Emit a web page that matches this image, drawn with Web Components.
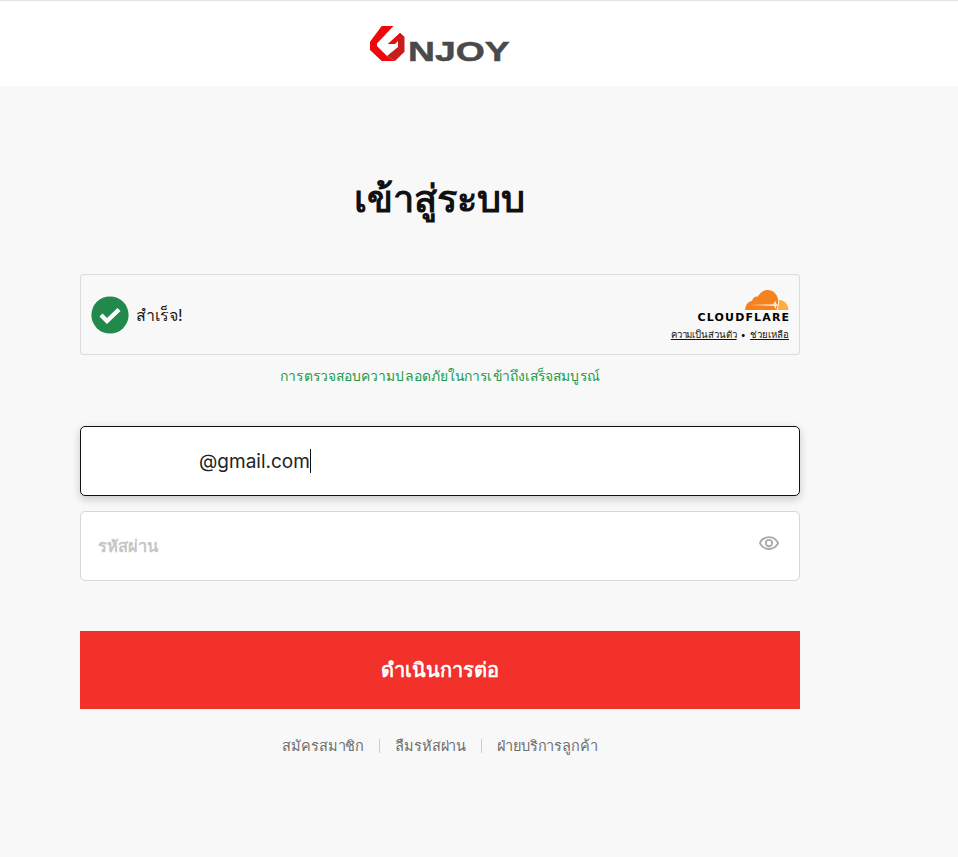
<!DOCTYPE html>
<html lang="th">
<head>
<meta charset="utf-8">
<title>เข้าสู่ระบบ</title>
<style>
  html, body { margin: 0; background: #f8f8f8; }
  body { font-family: "Inter", "Noto Sans", "Noto Sans CJK SC", sans-serif; }
</style>
</head>
<body>
<site-header></site-header>
<login-page>
  <h-title slot="title">เข้าสู่ระบบ</h-title>
  <captcha-box slot="captcha"></captcha-box>
  <text-field slot="email" value="@gmail.com" focused></text-field>
  <text-field slot="password" placeholder="รหัสผ่าน" eye></text-field>
  <submit-button slot="submit">ดำเนินการต่อ</submit-button>
  <link-row slot="links"></link-row>
</login-page>

<script>
class SiteHeader extends HTMLElement {
  connectedCallback() {
    this.attachShadow({ mode: "open" });
    this.shadowRoot.innerHTML = `
      <style>
        :host { display: block; height: 85px; background: #fff; border-top: 1px solid #e3e6dc; }
        .inner { width: 720px; margin-left: 80px; height: 100%; display: flex; justify-content: center; align-items: center; }
        .logo { display: flex; align-items: flex-end; height: 37px; width: 141px; margin-top: -1px; margin-left: -1px; }
        svg { display: block; flex: none; }
        .name {
          font: 700 28.5px/21px "Liberation Sans", sans-serif;
          color: #4a4a4a;
          -webkit-text-stroke: 0.5px #4a4a4a;
          display: inline-block;
          margin-left: 2px;
          transform: scaleX(1.31);
          transform-origin: left center;
        }
      </style>
      <div class="inner">
        <div class="logo">
          <svg width="37" height="37" viewBox="0 0 37 37">
            <path d="M1 16.7 L12.7 1 L24.5 1 L8 18.5 L8 21 L18 31 L26 36 L12.7 36 L1 25 Z" fill="#ee0a0a"/>
            <path d="M18 31 L26 36 L35.5 26.7 L35.5 11.7 L31 8 L19 19 L26 19 L29 16 L29 22 Z" fill="#c91c1c"/>
            <path d="M19 19 L31 8 L33 9.7 L22 19 Z" fill="#ee0a0a"/>
          </svg>
          <span class="name">NJOY</span>
        </div>
      </div>
    `;
  }
}
customElements.define("site-header", SiteHeader);

class LoginPage extends HTMLElement {
  connectedCallback() {
    this.attachShadow({ mode: "open" });
    this.shadowRoot.innerHTML = `
      <style>
        :host { display: block; width: 720px; margin-left: 80px; padding-top: 88px; }
        .title { display: block; margin-bottom: 52px; }
        .note { text-align: center; color: #1e9a4a; font-size: 13.9px; letter-spacing: 0.09px; line-height: 20px; margin-top: 11px; margin-bottom: 40px; }
        .fields { display: flex; flex-direction: column; gap: 15px; margin-bottom: 50px; }
      </style>
      <div class="title"><slot name="title"></slot></div>
      <slot name="captcha"></slot>
      <div class="note">การตรวจสอบความปลอดภัยในการเข้าถึงเสร็จสมบูรณ์</div>
      <div class="fields">
        <slot name="email"></slot>
        <slot name="password"></slot>
      </div>
      <slot name="submit"></slot>
      <slot name="links"></slot>
    `;
  }
}
customElements.define("login-page", LoginPage);

class HTitle extends HTMLElement {
  connectedCallback() {
    this.attachShadow({ mode: "open" });
    this.shadowRoot.innerHTML = `
      <style>
        :host { display: block; text-align: center; font-size: 38px; font-weight: 700; line-height: 48px; color: #111; padding-right: 2px; }
      </style>
      <slot></slot>
    `;
  }
}
customElements.define("h-title", HTitle);

class CaptchaBox extends HTMLElement {
  connectedCallback() {
    this.attachShadow({ mode: "open" });
    this.shadowRoot.innerHTML = `
      <style>
        :host { display: block; }
        .box {
          height: 79px; border: 1px solid #dcdcdc; border-radius: 3px; background: #f8f8f8;
          display: flex; align-items: center; justify-content: space-between; padding: 0 10px;
        }
        .left { display: flex; align-items: center; gap: 7px; font-size: 16px; letter-spacing: 0.1px; color: #1a1a1a; }
        .left svg { margin-left: -0.5px; }
        .left span { margin-top: 2px; }
        .right { display: flex; flex-direction: column; align-items: flex-end; margin-top: 2px; }
        .cf { display: block; margin-right: -1px; margin-top: 1px; }
        .word {
          font: 700 10px/12px "DejaVu Sans", sans-serif; letter-spacing: 1.05px; color: #000;
          margin-top: 1px; margin-right: -1px; transform: scaleX(1.1); transform-origin: right center;
        }
        .links { font-size: 9.6px; line-height: 14px; color: #111; margin-top: 4px; display: flex; gap: 4px; }
        .links u { text-underline-offset: 1px; }
        .links u:first-child { letter-spacing: -0.1px; }
      </style>
      <div class="box">
        <div class="left">
          <svg width="38" height="38" viewBox="0 0 38 38">
            <circle cx="19" cy="19" r="18.6" fill="#22894c"/>
            <path d="M10 19 L16 25 L28 13.5" fill="none" stroke="#fff" stroke-width="4.4"/>
          </svg>
          <span>สำเร็จ!</span>
        </div>
        <div class="right">
          <svg class="cf" width="46" height="21" viewBox="0 0 46 21">
            <path d="M1 20 C1.5 15 4 11.5 8 11 C8.5 8 11 6 14 6.5 C16 2.5 19.5 0 24 0 C29 0 33 4 34 9 C34.5 13 33.5 17 32.5 20 Z" fill="#f6821f"/>
            <path d="M33.5 20 C34.5 16 35.5 12 35 10 C39 9.5 44 13 44.5 20 Z" fill="#fbad41"/>
            <path d="M6 15 L29 14.2 L31.5 11 L32.5 14 L35.5 15 L32.5 16 L31.5 19 L30 16 Z" fill="#fde3c8"/>
          </svg>
          <div class="word">CLOUDFLARE</div>
          <div class="links"><u>ความเป็นส่วนตัว</u><span>•</span><u>ช่วยเหลือ</u></div>
        </div>
      </div>
    `;
  }
}
customElements.define("captcha-box", CaptchaBox);

class TextField extends HTMLElement {
  connectedCallback() {
    const focused = this.hasAttribute("focused");
    const value = this.getAttribute("value") || "";
    const placeholder = this.getAttribute("placeholder") || "";
    this.attachShadow({ mode: "open" });
    this.shadowRoot.innerHTML = `
      <style>
        :host { display: block; }
        .field {
          position: relative; box-sizing: border-box; height: 70px; background: #fff;
          border: 1px solid #d6d6de; border-radius: 5px; display: flex; align-items: center;
          padding: 0 17px; font-size: 16.4px;
        }
        .field.focused { border-color: #111; box-shadow: 0 3px 8px rgba(0,0,0,.2); padding-left: 118px; font-size: 19px; color: #222; }
        .ph { color: #c6c6c6; font-weight: 700; }
        .caret { display: inline-block; width: 1px; height: 24px; background: #111; }
        .eye { position: absolute; right: 19.5px; top: 20px; }
      </style>
      <div class="field ${focused ? "focused" : ""}">
        ${value ? `<span>${value}</span><span class="caret"></span>` : `<span class="ph">${placeholder}</span>`}
        ${this.hasAttribute("eye") ? `
        <svg class="eye" width="22" height="22" viewBox="0 0 24 24">
          <path fill="#a9a9a9" d="M12 4.5C7 4.5 2.73 7.61 1 12c1.73 4.39 6 7.5 11 7.5s9.27-3.11 11-7.5c-1.73-4.39-6-7.5-11-7.5zM12 17.5c-3.79 0-7.17-2.13-8.82-5.5C4.83 8.63 8.21 6.5 12 6.5s7.17 2.13 8.82 5.5c-1.65 3.37-5.03 5.5-8.82 5.5zm0-10a4.5 4.5 0 1 0 0 9 4.5 4.5 0 0 0 0-9zm0 7a2.5 2.5 0 1 1 0-5 2.5 2.5 0 0 1 0 5z"/>
        </svg>` : ""}
      </div>
    `;
  }
}
customElements.define("text-field", TextField);

class SubmitButton extends HTMLElement {
  connectedCallback() {
    this.attachShadow({ mode: "open" });
    this.shadowRoot.innerHTML = `
      <style>
        :host {
          display: flex; align-items: center; justify-content: center; height: 78px; box-sizing: border-box;
          padding-right: 1px; background: #f1312a; color: #fff; font-size: 20px; font-weight: 700;
        }
      </style>
      <slot></slot>
    `;
  }
}
customElements.define("submit-button", SubmitButton);

class LinkRow extends HTMLElement {
  connectedCallback() {
    this.attachShadow({ mode: "open" });
    this.shadowRoot.innerHTML = `
      <style>
        :host { display: flex; justify-content: center; align-items: center; margin-top: 27px; font-size: 14.5px; letter-spacing: -0.12px; line-height: 20px; color: #6f6f6f; }
        .sep { width: 1px; height: 14px; background: #ccc; margin: 0 15px; }
      </style>
      <span>สมัครสมาชิก</span><span class="sep"></span>
      <span>ลืมรหัสผ่าน</span><span class="sep"></span>
      <span>ฝ่ายบริการลูกค้า</span>
    `;
  }
}
customElements.define("link-row", LinkRow);
</script>
</body>
</html>
